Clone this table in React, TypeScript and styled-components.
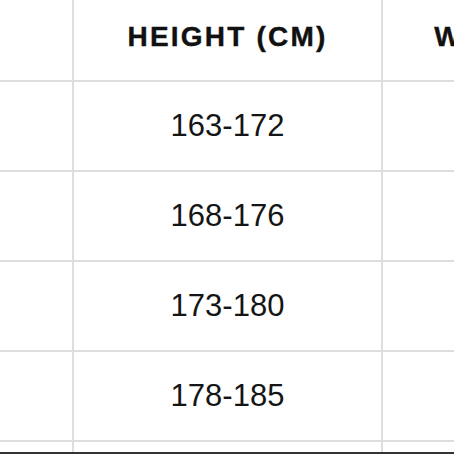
import React from 'react';
import styled, { createGlobalStyle } from 'styled-components';

const GlobalStyle = createGlobalStyle`
  html, body {
    margin: 0;
    padding: 0;
    background: #fff;
  }
  body {
    font-family: "Liberation Sans", Arial, sans-serif;
    color: #111;
  }
`;

const rows = [
  { height: '163-172', weight: '55-65' },
  { height: '168-176', weight: '60-70' },
  { height: '173-180', weight: '65-75' },
  { height: '178-185', weight: '70-80' },
  { height: '183-190', weight: '75-85' },
];

const App: React.FC = () => {
  return (
    <Page>
      <GlobalStyle />
      <TableArea>
        <Grid>
          <HeadCell />
          <HeadCell>HEIGHT (CM)</HeadCell>
          <HeadCell>WEIGHT (KG)</HeadCell>
          {rows.map((row) => (
            <React.Fragment key={row.height}>
              <Cell />
              <Cell>{row.height}</Cell>
              <Cell>{row.weight}</Cell>
            </React.Fragment>
          ))}
        </Grid>
      </TableArea>
      <BottomEdge />
    </Page>
  );
};

export default App;

const Page = styled.div`
  width: 454px;
  height: 454px;
  display: flex;
  flex-direction: column;
  overflow: hidden;
`;

const TableArea = styled.div`
  flex: 1;
  overflow: hidden;
`;

const Grid = styled.div`
  display: grid;
  grid-template-columns: 72px 307px 307px;
  grid-auto-rows: 88px;
  grid-template-rows: 80px;
  gap: 2px;
  background: #dedede;
  width: max-content;
`;

const HeadCell = styled.div`
  background: #fff;
  display: flex;
  align-items: center;
  justify-content: center;
  font-size: 28px;
  font-weight: 700;
  letter-spacing: 2.2px;
  color: #111;
  white-space: nowrap;
  padding-bottom: 7px;
  -webkit-text-stroke: 0.4px #111;
`;

const Cell = styled.div`
  background: #fff;
  display: flex;
  align-items: center;
  justify-content: center;
  font-size: 31px;
  color: #151515;
  white-space: nowrap;
`;

const BottomEdge = styled.div`
  height: 2px;
  background: #333;
`;
